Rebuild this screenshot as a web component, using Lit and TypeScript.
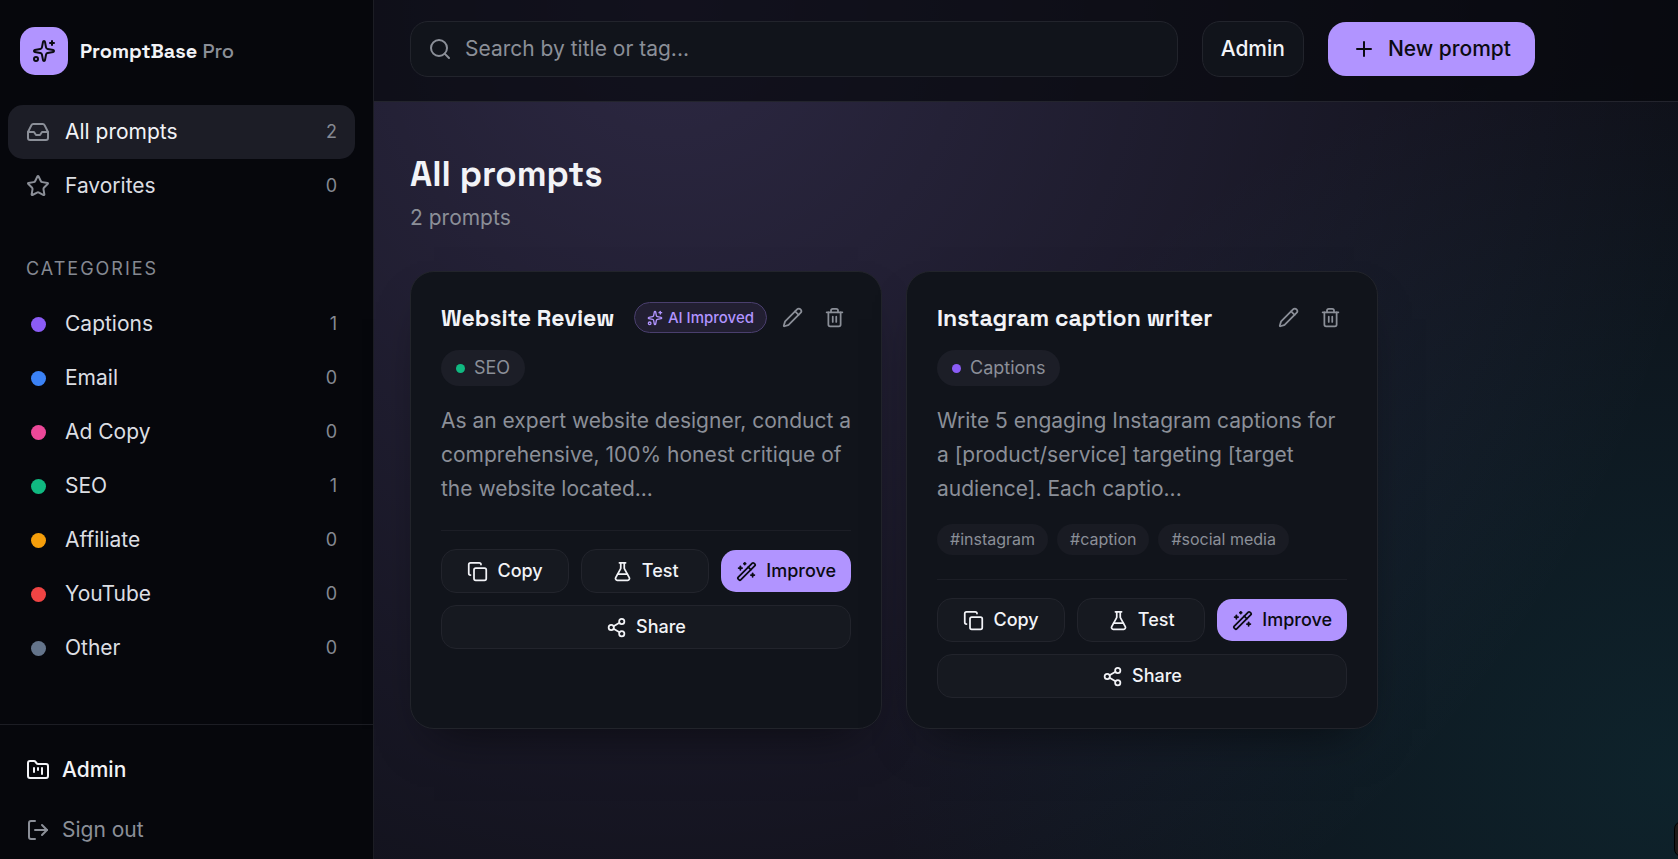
import { LitElement, html, svg, css, nothing, type SVGTemplateResult } from "lit";
import { customElement, property, state } from "lit/decorators.js";
import { classMap } from "lit/directives/class-map.js";
import { styleMap } from "lit/directives/style-map.js";

const glyphs: Record<string, SVGTemplateResult> = {
  sparkles: svg`<path d="M11.017 2.814a1 1 0 0 1 1.966 0l1.051 5.558a2 2 0 0 0 1.594 1.594l5.558 1.051a1 1 0 0 1 0 1.966l-5.558 1.051a2 2 0 0 0-1.594 1.594l-1.051 5.558a1 1 0 0 1-1.966 0l-1.051-5.558a2 2 0 0 0-1.594-1.594l-5.558-1.051a1 1 0 0 1 0-1.966l5.558-1.051a2 2 0 0 0 1.594-1.594z"/><path d="M20 2v4"/><path d="M22 4h-4"/><circle cx="4" cy="20" r="2"/>`,
  inbox: svg`<path d="M22 12h-6l-2 3h-4l-2-3H2"/><path d="M5.45 5.11 2 12v6a2 2 0 0 0 2 2h16a2 2 0 0 0 2-2v-6l-3.45-6.89A2 2 0 0 0 16.76 4H7.24a2 2 0 0 0-1.79 1.11z"/>`,
  star: svg`<path d="M11.525 2.295a.53.53 0 0 1 .95 0l2.31 4.679a2.123 2.123 0 0 0 1.595 1.16l5.166.756a.53.53 0 0 1 .294.904l-3.736 3.638a2.123 2.123 0 0 0-.611 1.878l.882 5.14a.53.53 0 0 1-.771.56l-4.618-2.428a2.122 2.122 0 0 0-1.973 0L6.396 21.01a.53.53 0 0 1-.77-.56l.881-5.139a2.122 2.122 0 0 0-.611-1.879L2.16 9.795a.53.53 0 0 1 .294-.906l5.165-.755a2.122 2.122 0 0 0 1.597-1.16z"/>`,
  folder: svg`<path d="M4 20h16a2 2 0 0 0 2-2V8a2 2 0 0 0-2-2h-7.93a2 2 0 0 1-1.66-.9l-.82-1.2A2 2 0 0 0 7.93 3H4a2 2 0 0 0-2 2v13c0 1.1.9 2 2 2Z"/><path d="M8 10v4"/><path d="M12 10v2"/><path d="M16 10v6"/>`,
  logout: svg`<path d="m16 17 5-5-5-5"/><path d="M21 12H9"/><path d="M9 21H5a2 2 0 0 1-2-2V5a2 2 0 0 1 2-2h4"/>`,
  search: svg`<circle cx="11" cy="11" r="8"/><path d="m21 21-4.34-4.34"/>`,
  plus: svg`<path d="M5 12h14"/><path d="M12 5v14"/>`,
  pencil: svg`<path d="M21.174 6.812a1 1 0 0 0-3.986-3.987L3.842 16.174a2 2 0 0 0-.5.83l-1.321 4.352a.5.5 0 0 0 .623.622l4.353-1.32a2 2 0 0 0 .83-.497z"/><path d="m15 5 4 4"/>`,
  trash: svg`<path d="M3 6h18"/><path d="M19 6v14a2 2 0 0 1-2 2H7a2 2 0 0 1-2-2V6"/><path d="M8 6V4a2 2 0 0 1 2-2h4a2 2 0 0 1 2 2v2"/><path d="M10 11v6"/><path d="M14 11v6"/>`,
  copy: svg`<rect width="14" height="14" x="8" y="8" rx="2" ry="2"/><path d="M4 16c-1.1 0-2-.9-2-2V4c0-1.1.9-2 2-2h10c1.1 0 2 .9 2 2"/>`,
  flask: svg`<path d="M14 2v6a2 2 0 0 0 .245.96l5.51 10.08A2 2 0 0 1 18 22H6a2 2 0 0 1-1.755-2.96l5.51-10.08A2 2 0 0 0 10 8V2"/><path d="M6.453 15h11.094"/><path d="M8.5 2h7"/>`,
  wand: svg`<path d="m21.64 3.64-1.28-1.28a1.21 1.21 0 0 0-1.72 0L2.36 18.64a1.21 1.21 0 0 0 0 1.72l1.28 1.28a1.2 1.2 0 0 0 1.72 0L21.64 5.36a1.2 1.2 0 0 0 0-1.72"/><path d="m14 7 3 3"/><path d="M5 6v4"/><path d="M19 14v4"/><path d="M10 2v2"/><path d="M7 8H3"/><path d="M21 16h-4"/><path d="M11 3H9"/>`,
  share: svg`<circle cx="18" cy="5" r="3"/><circle cx="6" cy="12" r="3"/><circle cx="18" cy="19" r="3"/><path d="m8.59 13.51 6.83 3.98"/><path d="m15.41 6.51-6.82 3.98"/>`,
};

const icon = (name: string, size: number, weight = 2) => html`
  <svg class="icon" width=${size} height=${size} viewBox="0 0 24 24" fill="none" stroke="currentColor"
    stroke-width=${weight} stroke-linecap="round" stroke-linejoin="round" aria-hidden="true">${glyphs[name]}</svg>`;

interface Category { name: string; color: string; }
interface Prompt { title: string; category: string; text: string; tags: string[]; improved: boolean; }

const categories: Category[] = [
  { name: "Captions", color: "#8b5cf6" },
  { name: "Email", color: "#3b82f6" },
  { name: "Ad Copy", color: "#ec4899" },
  { name: "SEO", color: "#10b981" },
  { name: "Affiliate", color: "#f59e0b" },
  { name: "YouTube", color: "#ef4444" },
  { name: "Other", color: "#64748b" },
];

const prompts: Prompt[] = [
  {
    title: "Website Review",
    category: "SEO",
    text: "As an expert website designer, conduct a comprehensive, 100% honest critique of the website located...",
    tags: [],
    improved: true,
  },
  {
    title: "Instagram caption writer",
    category: "Captions",
    text: "Write 5 engaging Instagram captions for a [product/service] targeting [target audience]. Each captio...",
    tags: ["instagram", "caption", "social media"],
    improved: false,
  },
];

const colorOf = (name: string) => categories.find((c) => c.name === name)?.color ?? "#64748b";

const shared = css`
  * { box-sizing: border-box; }
  button, input { font: inherit; color: inherit; margin: 0; border: 0; background: none; padding: 0; }
  button { cursor: pointer; }
  .icon { display: block; flex: none; }
  h1, h2, p, ul { margin: 0; padding: 0; }
  ul { list-style: none; }
  .display { font-family: "Space Grotesk", Inter, sans-serif; font-weight: 600; }
`;

@customElement("prompt-card")
export class PromptCard extends LitElement {
  @property({ attribute: false }) prompt!: Prompt;

  static styles = [shared, css`
    :host { display: block; }
    .card {
      height: 100%;
      padding: 30px;
      border: 1px solid #22242b;
      border-radius: 24px;
      background: #11141b;
      box-shadow: 0 24px 48px -24px rgb(0 0 0 / 60%);
    }
    .head { display: flex; align-items: center; gap: 9px; height: 31px; }
    .title { flex: 1; min-width: 0; font-size: 23px; line-height: 30px; color: #f2f3f7; white-space: nowrap; }
    .badge {
      display: flex; align-items: center; gap: 5px; height: 31px; padding: 0 12px;
      border: 1px solid #4a3f6e; border-radius: 16px; background: #221f32;
      color: #b194ff; font-size: 15px; line-height: 28px; font-weight: 500; white-space: nowrap;
    }
    .tool { display: grid; place-items: center; width: 33px; height: 33px; color: #8b8f98; }
    .category {
      display: inline-flex; align-items: center; gap: 9px; height: 36px; margin-top: 17px; padding: 0 15px;
      border-radius: 18px; background: #1c1e27; color: #8b8f98; font-size: 18px;
    }
    .dot { width: 9px; height: 9px; border-radius: 50%; }
    .text { margin-top: 18px; font-size: 21px; line-height: 34px; color: #8b8f98; }
    .tags { display: flex; flex-wrap: wrap; gap: 9px; margin-top: 18px; }
    .tag { height: 31px; padding: 0 13px; border-radius: 16px; background: #191b23; color: #8b8f98; font-size: 16px; line-height: 30px; }
    .actions {
      display: flex; flex-wrap: wrap; align-items: center; gap: 12px;
      margin-top: 24px; padding-top: 18px; border-top: 1px solid #1c1e26;
    }
    .action {
      flex: 1 1 96px; display: flex; align-items: center; justify-content: center; gap: 9px;
      height: 44px; padding: 0 14px; border: 1px solid #22242c; border-radius: 15px;
      background: #161920; color: #f2f3f7; font-size: 18px; font-weight: 500;
    }
    .accent { height: 42px; padding: 0 15px; border: 0; background: #b194ff; color: #0b0b12; }
    .wide { flex-basis: 100%; }
  `];

  render() {
    const p = this.prompt;
    return html`
      <article class="card">
        <div class="head">
          <h2 class="title display">${p.title}</h2>
          ${p.improved ? html`<span class="badge">${icon("sparkles", 16)}AI Improved</span>` : nothing}
          <button class="tool" aria-label="Edit ${p.title}">${icon("pencil", 21)}</button>
          <button class="tool" aria-label="Delete ${p.title}">${icon("trash", 21)}</button>
        </div>
        <span class="category"><span class="dot" style=${styleMap({ background: colorOf(p.category) })}></span>${p.category}</span>
        <p class="text">${p.text}</p>
        ${p.tags.length ? html`<ul class="tags">${p.tags.map((t) => html`<li class="tag">#${t}</li>`)}</ul>` : nothing}
        <div class="actions">
          <button class="action">${icon("copy", 21)}Copy</button>
          <button class="action">${icon("flask", 21)}Test</button>
          <button class="action accent">${icon("wand", 21)}Improve</button>
          <button class="action wide">${icon("share", 21)}Share</button>
        </div>
      </article>`;
  }
}

@customElement("app-root")
export class AppRoot extends LitElement {
  @state() private selected = "All prompts";

  static styles = [shared, css`
    :host {
      display: grid;
      grid-template-columns: 374px minmax(0, 1fr);
      height: 100vh;
      overflow: hidden;
      position: relative;
      font-family: Inter, sans-serif;
      font-size: 21px;
      line-height: 30px;
      color: #dcdee3;
      background:
        radial-gradient(1050px 1100px at 40% 0%, rgb(177 148 255 / 19%), transparent 100%),
        radial-gradient(1000px 900px at 100% 90%, rgb(13 148 160 / 15%), transparent 80%),
        #0e0f17;
    }
    .sidebar { display: flex; flex-direction: column; border-right: 1px solid #1c1d24; background: #06070c; }
    .brand { display: flex; align-items: center; gap: 12px; padding: 27px 20px 30px; }
    .logo { display: grid; place-items: center; width: 48px; height: 48px; border-radius: 15px; background: #b194ff; color: #0b0b12; }
    .name { font-size: 20px; color: #f2f3f7; }
    .muted { color: #8b8f98; font-weight: 500; }
    .nav { flex: 1; padding: 0 18px 0 8px; }
    .item { display: flex; align-items: center; gap: 15px; width: 100%; height: 54px; padding: 0 18px; border-radius: 15px; text-align: left; }
    .item .icon { color: #8b8f98; }
    .active { background: #1c1d26; color: #f2f3f7; }
    .label { flex: 1; }
    .count { font-size: 18px; color: #858992; }
    .swatch { width: 15px; height: 15px; margin: 0 4px 0 5px; border-radius: 50%; }
    .heading { margin: 41px 18px 13px; font-size: 18px; font-weight: 400; letter-spacing: 2px; color: #858992; }
    .foot { display: grid; gap: 6px; padding: 18px 18px 2px 8px; border-top: 1px solid #1c1d24; }
    .foot .item { gap: 12px; color: #8b8f98; }
    .foot .strong { color: #f2f3f7; font-weight: 500; }
    .strong .icon { color: inherit; }
    .top {
      display: flex; align-items: center; gap: 24px; height: 102px; padding: 0 143px 4px 36px;
      border-bottom: 1px solid #23242d; background: rgb(6 7 12 / 68%);
    }
    .search {
      flex: 1; display: flex; align-items: center; gap: 13px; height: 56px; padding: 0 17px;
      border: 1px solid #22242c; border-radius: 18px; background: #11141b; color: #8b8f98;
    }
    .query { flex: 1; min-width: 0; outline: 0; color: #f2f3f7; }
    .query::placeholder { color: #8b8f98; opacity: 1; }
    .admin { height: 56px; padding: 0 18px; border: 1px solid #22242c; border-radius: 18px; background: #11141b; color: #f2f3f7; font-weight: 500; }
    .new { display: flex; align-items: center; gap: 12px; height: 54px; padding: 0 24px; border-radius: 18px; background: #b194ff; color: #0b0b12; font-weight: 500; white-space: nowrap; }
    .main { padding: 48px 36px; }
    .page-title { font-size: 35px; line-height: 48px; color: #f2f3f7; }
    .total { margin: 4px 0 37px; color: #8b8f98; line-height: 32px; }
    .grid { display: grid; grid-template-columns: repeat(2, minmax(0, 1fr)); gap: 24px; max-width: 968px; }
    .edge { position: absolute; right: -32px; bottom: 2px; width: 36px; height: 36px; border: 1px solid #000; border-radius: 8px; background: #1f1a18; }
  `];

  private row(name: string, mark: unknown, count: number) {
    return html`
      <button class=${classMap({ item: true, active: this.selected === name })} @click=${() => (this.selected = name)}>
        ${mark}<span class="label">${name}</span><span class="count">${count}</span>
      </button>`;
  }

  render() {
    const count = (name: string) => prompts.filter((p) => p.category === name).length;
    return html`
      <aside class="sidebar">
        <div class="brand">
          <span class="logo">${icon("sparkles", 24)}</span>
          <span class="name display">PromptBase <span class="muted">Pro</span></span>
        </div>
        <nav class="nav" aria-label="Library">
          ${this.row("All prompts", icon("inbox", 24), prompts.length)}
          ${this.row("Favorites", icon("star", 24), 0)}
          <h2 class="heading">CATEGORIES</h2>
          ${categories.map((c) => this.row(c.name, html`<span class="swatch" style=${styleMap({ background: c.color })}></span>`, count(c.name)))}
        </nav>
        <div class="foot">
          <button class="item strong">${icon("folder", 24)}Admin</button>
          <button class="item">${icon("logout", 24)}Sign out</button>
        </div>
      </aside>
      <div>
        <header class="top">
          <label class="search">${icon("search", 24)}
            <input class="query" type="text" placeholder="Search by title or tag..." aria-label="Search by title or tag" />
          </label>
          <button class="admin">Admin</button>
          <button class="new">${icon("plus", 24)}New prompt</button>
        </header>
        <main class="main">
          <h1 class="page-title display">All prompts</h1>
          <p class="total">2 prompts</p>
          <div class="grid">${prompts.map((p) => html`<prompt-card .prompt=${p}></prompt-card>`)}</div>
        </main>
      </div>
      <span class="edge"></span>`;
  }
}
